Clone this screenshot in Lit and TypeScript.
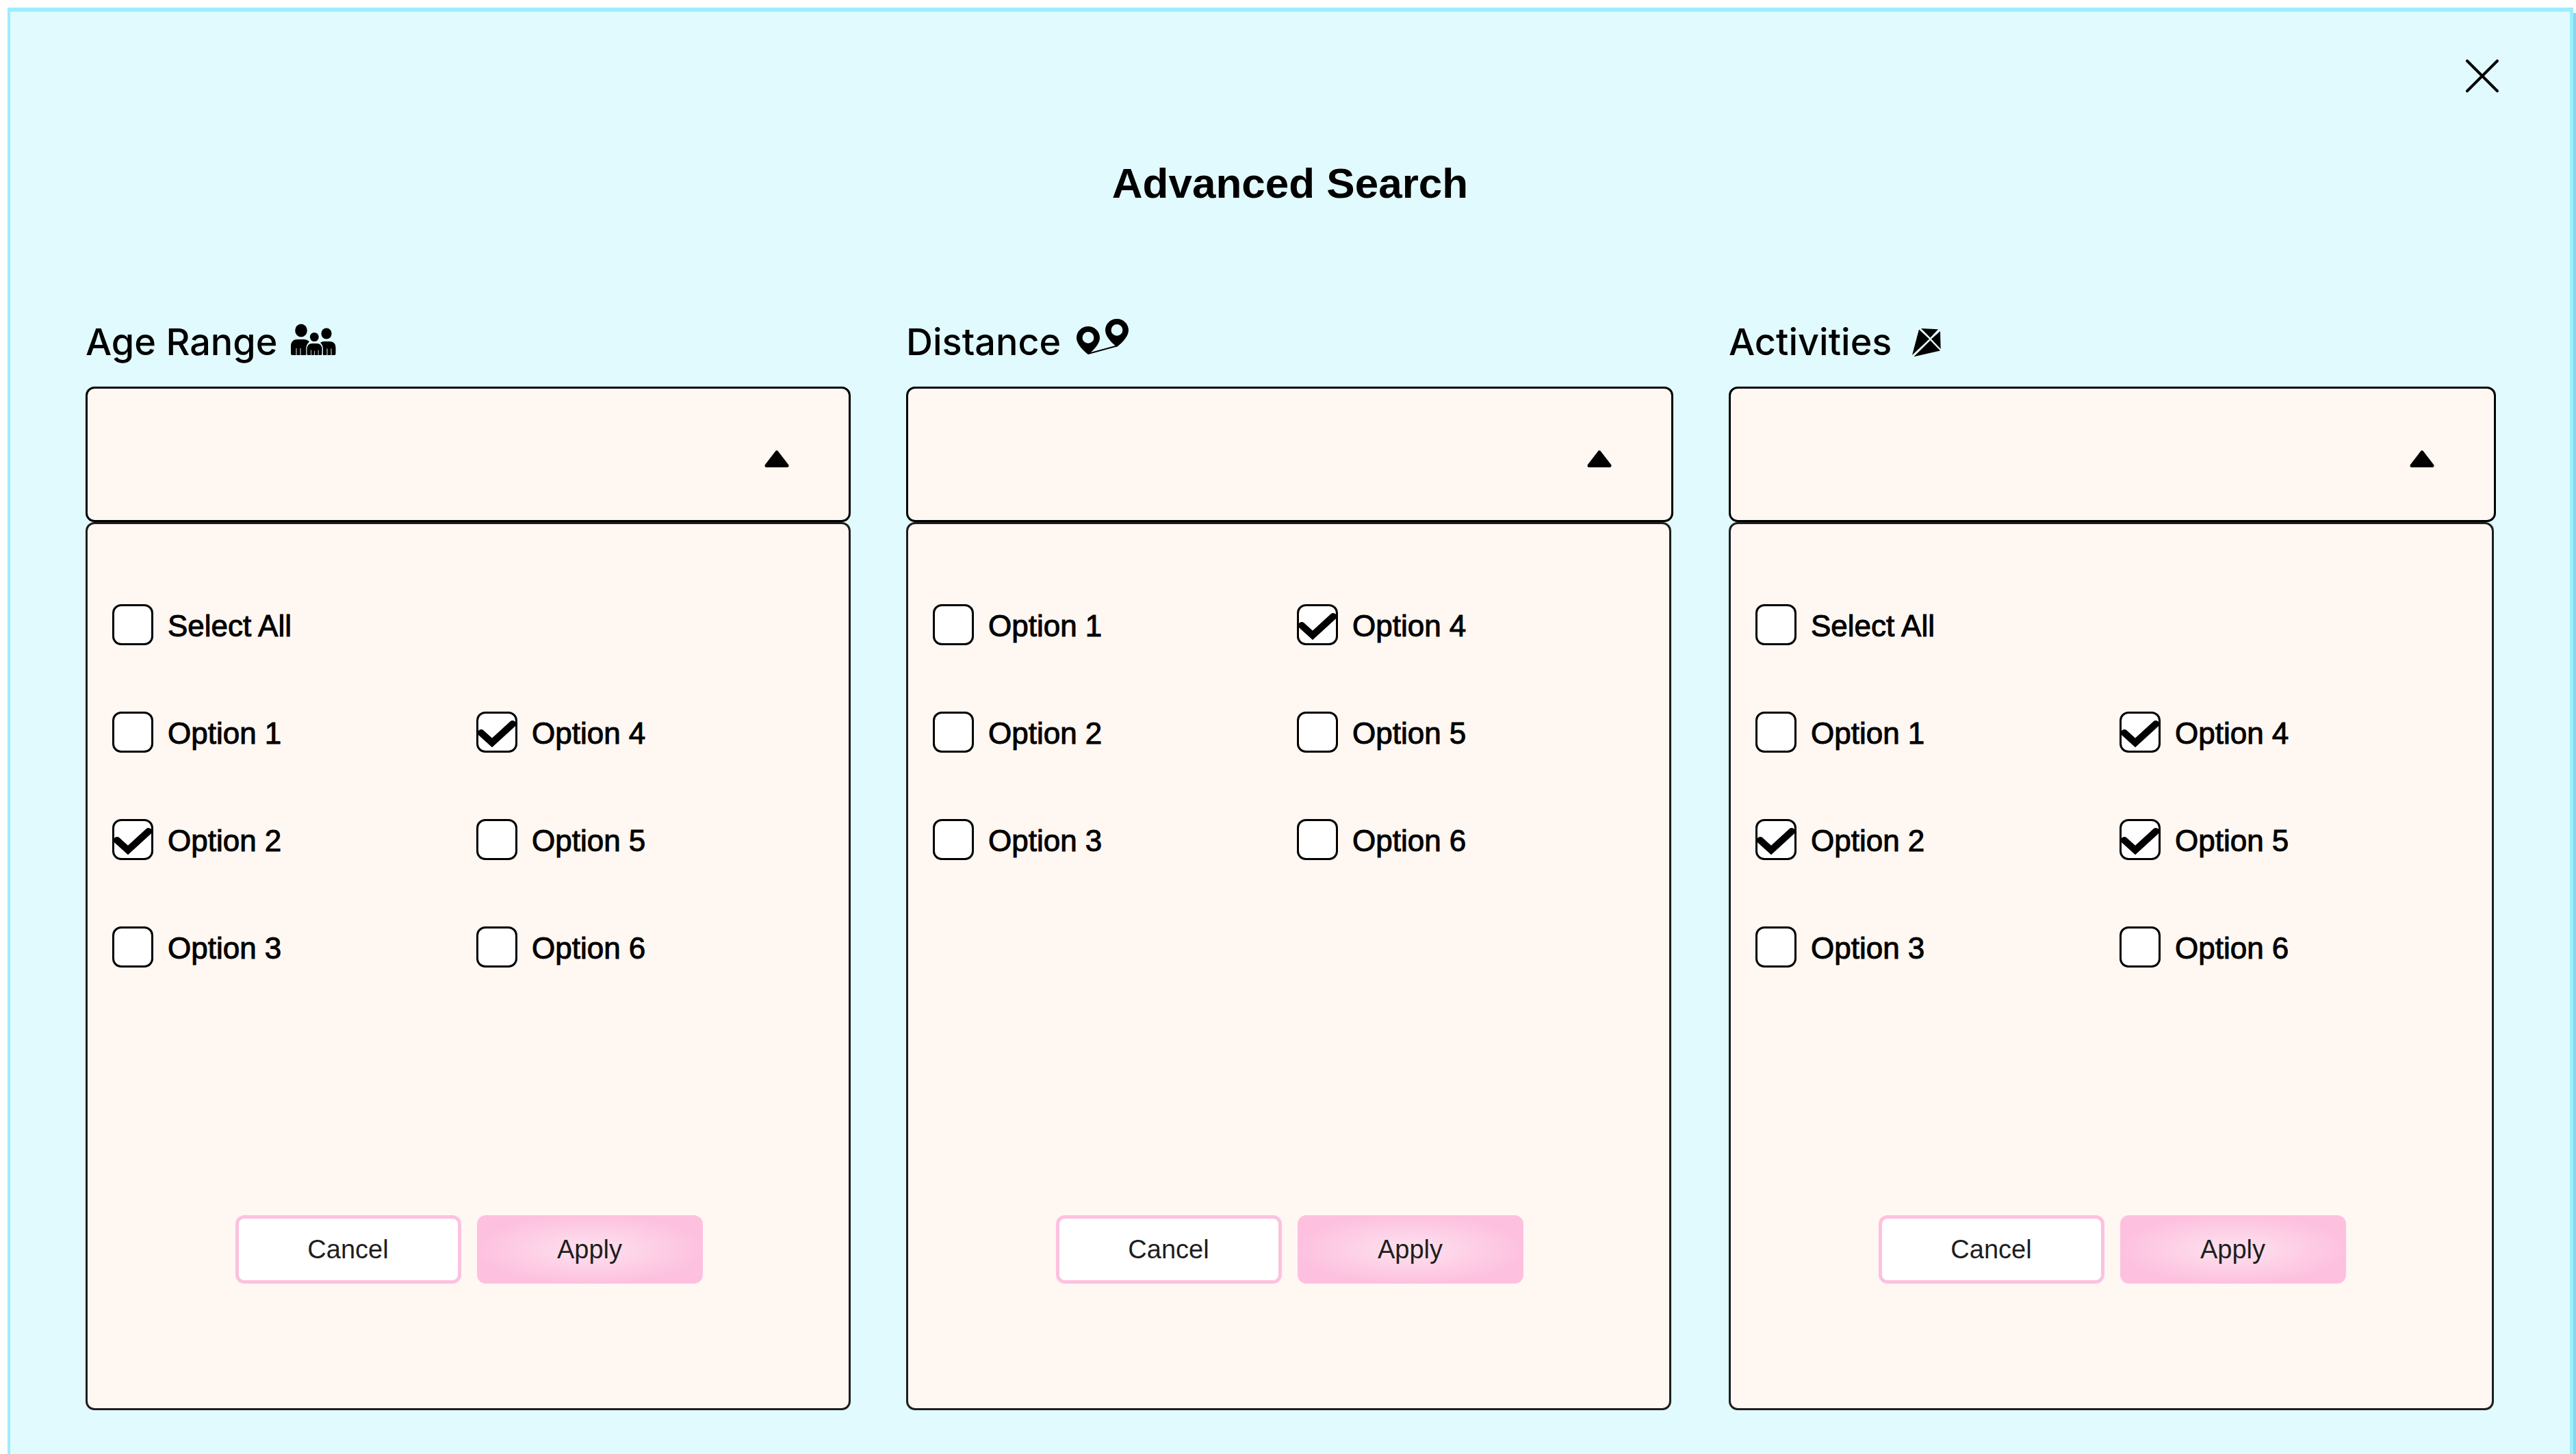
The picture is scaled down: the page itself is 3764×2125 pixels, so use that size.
import { LitElement, html, svg, css, nothing } from "lit";
import { customElement, property, state } from "lit/decorators.js";

interface Option {
  label: string;
  checked: boolean;
}

interface Filter {
  id: string;
  title: string;
  selectAll: boolean;
  options: Option[];
}

const makeOptions = (...checked: number[]): Option[] =>
  [1, 2, 3, 4, 5, 6].map((n) => ({ label: `Option ${n}`, checked: checked.includes(n) }));

const FILTERS: Filter[] = [
  { id: "age", title: "Age Range", selectAll: true, options: makeOptions(2, 4) },
  { id: "distance", title: "Distance", selectAll: false, options: makeOptions(4) },
  { id: "activities", title: "Activities", selectAll: true, options: makeOptions(2, 4, 5) },
];

const familyIcon = html`
  <svg class="icon" width="68" height="68" viewBox="0 0 68 68" aria-hidden="true">
    ${svg`
      <ellipse cx="16" cy="17" rx="8.800" ry="9.500"/>
      <ellipse cx="53" cy="21.500" rx="7.600" ry="8"/>
      <ellipse cx="35.300" cy="26.500" rx="6.400" ry="6.600"/>
      <path d="M1 50V40C1 33 5 30 11 30H20Q25 30 28 33.500Q23.500 37.500 23.300 43V53H15.500V43H14.500V53H9.500V43H8.500V53H3Q1 53 1 51Z"/>
      <path d="M24.500 51V45Q24.500 36 32 36H39Q46.500 36 46.500 45V51Q46.500 53 45 53H41.500V45.500H40.700V53H36V47H35.200V53H30.800V45.500H30V53H26Q24.500 53 24.500 51Z"/>
      <path d="M44 35Q46 33 49.500 33H57Q66.500 33 66.500 42V51Q66.500 53 64.500 53H60.500V43.500H59.500V53H54.500V43.500H53.500V53H48V45Q48 38 44 35Z"/>
    `}
  </svg>`;

const routeIcon = html`
  <svg class="icon" width="84" height="68" viewBox="0 0 84 68" aria-hidden="true">
    ${svg`
      <path fill-rule="evenodd" d="M22 11C31.500 11 39 18.500 39 27.500C39 36 31 45 22 52C13 45 5 36 5 27.500C5 18.500 12.500 11 22 11ZM22 19A8.400 8.400 0 1 0 22 35.800A8.400 8.400 0 1 0 22 19Z"/>
      <path fill-rule="evenodd" d="M64 0C73.500 0 81 7.500 81 16.500C81 25 73 34 64 41C55 34 47 25 47 16.500C47 7.500 54.500 0 64 0ZM64 8A8.400 8.400 0 1 0 64 24.800A8.400 8.400 0 1 0 64 8Z"/>
      <path d="M22 51L64 39.500" fill="none" stroke="#000" stroke-width="2"/>
    `}
  </svg>`;

const kiteIcon = html`
  <svg class="icon" width="56" height="68" viewBox="0 0 56 68" aria-hidden="true">
    ${svg`
      <path d="M25 14L50 15.300L38.500 27.500Z"/>
      <path d="M22 15.500L37 29.500L12 53Z"/>
      <path d="M53 18L53.700 44L40 29.500Z"/>
      <path d="M38.500 31.500L53 46.500L14.500 55.200Z"/>
    `}
  </svg>`;

const ICONS: Record<string, unknown> = {
  age: familyIcon,
  distance: routeIcon,
  activities: kiteIcon,
};

@customElement("filter-option")
export class FilterOption extends LitElement {
  @property() label = "";
  @property({ type: Boolean }) checked = false;

  static styles = css`
    :host {
      display: block;
    }
    .option {
      display: flex;
      align-items: flex-start;
      gap: 21px;
      width: max-content;
      font-size: 44px;
      line-height: 64px;
      cursor: pointer;
      -webkit-text-stroke: 1px #000;
    }
    .tick {
      display: grid;
    }
    .box,
    .mark {
      grid-area: 1 / 1;
      width: 60px;
      height: 60px;
    }
    .box {
      appearance: none;
      box-sizing: border-box;
      margin: 0;
      border: 3px solid #000;
      border-radius: 13px;
      background: #fff;
      cursor: pointer;
    }
    .mark {
      display: none;
      pointer-events: none;
    }
    .box:checked + .mark {
      display: block;
    }
  `;

  render() {
    return html`
      <label class="option">
        <span class="tick">
          <input
            class="box"
            type="checkbox"
            .checked=${this.checked}
            @change=${(e: Event) => (this.checked = (e.target as HTMLInputElement).checked)}
          />
          <svg class="mark" viewBox="0 0 60 60" aria-hidden="true">
            <path d="M7 31L23 45.500L53 18" fill="none" stroke="#000" stroke-width="10" stroke-linecap="round" />
          </svg>
        </span>
        <span>${this.label}</span>
      </label>
    `;
  }
}

@customElement("filter-group")
export class FilterGroup extends LitElement {
  @property({ attribute: false }) filter!: Filter;
  @state() private open = true;

  static styles = css`
    :host {
      display: block;
    }
    .heading {
      display: flex;
      align-items: center;
      gap: 18px;
      margin: 0 0 31px;
      font-family: Inter, sans-serif;
      font-size: 54px;
      font-weight: 500;
      line-height: 68px;
    }
    .icon {
      display: block;
      flex: none;
    }
    .trigger {
      display: flex;
      align-items: center;
      justify-content: flex-end;
      box-sizing: border-box;
      width: 100%;
      height: 198px;
      padding: 14px 87px 0 0;
      border: 3px solid #000;
      border-radius: 13px;
      background: #fff7f2;
      cursor: pointer;
    }
    .panel {
      display: flex;
      flex-direction: column;
      gap: 93px;
      box-sizing: border-box;
      min-height: 1298px;
      padding: 117px 12px 182px 36px;
      border: 3px solid #1e1e1e;
      border-radius: 13px;
      background: #fff7f2;
    }
    :host(:not(:first-child)) .panel {
      margin-right: 3px;
    }
    .panel[hidden] {
      display: none;
    }
    .options {
      display: grid;
      grid-template: repeat(3, auto) / repeat(2, 1fr);
      grid-auto-flow: column;
      row-gap: 93px;
    }
    .actions {
      display: flex;
      justify-content: center;
      gap: 23px;
      margin-top: auto;
      padding-right: 22px;
    }
    .action {
      flex: 0 1 330px;
      height: 100px;
      padding: 0;
      border: 5px solid #fdc1df;
      border-radius: 13px;
      color: #1e1e1e;
      font-family: inherit;
      font-size: 38px;
      line-height: 44px;
      cursor: pointer;
    }
    .cancel {
      background: #fff;
    }
    .apply {
      border: 0;
      background: radial-gradient(closest-side, #fee2ef, #fdc1df);
    }
  `;

  render() {
    const { id, title, selectAll, options } = this.filter;
    return html`
      <h2 class="heading"><span id="title">${title}</span>${ICONS[id]}</h2>
      <button
        class="trigger"
        type="button"
        aria-labelledby="title"
        aria-expanded=${this.open}
        aria-controls="panel"
        @click=${() => (this.open = !this.open)}
      >
        <svg width="36" height="26" viewBox="0 0 36 26" aria-hidden="true">
          <path d="M18 3L33 22.500H3Z" stroke="#000" stroke-width="5" stroke-linejoin="round" />
        </svg>
      </button>
      <div class="panel" id="panel" role="group" aria-labelledby="title" ?hidden=${!this.open}>
        ${selectAll ? html`<filter-option label="Select All"></filter-option>` : nothing}
        <div class="options">
          ${options.map((o) => html`<filter-option .label=${o.label} .checked=${o.checked}></filter-option>`)}
        </div>
        <div class="actions">
          <button class="action cancel" type="button">Cancel</button>
          <button class="action apply" type="button">Apply</button>
        </div>
      </div>
    `;
  }
}

@customElement("app-root")
export class AppRoot extends LitElement {
  static styles = css`
    :host {
      display: flex;
      box-sizing: border-box;
      min-height: 100vh;
      padding: 11px 4px 0 11px;
      overflow: hidden;
      background: #fefefe;
      color: #000;
      font-family: "Liberation Sans", Arial, sans-serif;
    }
    .dialog {
      display: flex;
      flex: 1;
      flex-direction: column;
      min-width: 0;
      padding: 70px 0 60px;
      border: solid #9eecff;
      border-width: 6px 5px 0 4px;
      background: #e1fafe;
      box-shadow: 4px 8px 0 #84d8ea;
    }
    .close {
      align-self: flex-end;
      width: 48px;
      height: 48px;
      margin-right: 104px;
      padding: 0;
      border: 0;
      background: none;
      cursor: pointer;
    }
    .close-icon {
      display: block;
    }
    .title {
      margin: 101px 0 166px;
      font-size: 62px;
      font-weight: 700;
      line-height: 64px;
      text-align: center;
    }
    .filters {
      display: grid;
      grid-template-columns: 1118fr 1121fr 1121fr;
      gap: 81px;
      padding: 0 108px 0 110px;
    }
  `;

  render() {
    return html`
      <main class="dialog">
        <button class="close" type="button" aria-label="Close">
          <svg class="close-icon" width="48" height="48" viewBox="0 0 48 48" aria-hidden="true">
            <path d="M2 2L46 46M46 2L2 46" stroke="#000" stroke-width="4" stroke-linecap="round" />
          </svg>
        </button>
        <h1 class="title">Advanced Search</h1>
        <div class="filters">
          ${FILTERS.map((f) => html`<filter-group .filter=${f}></filter-group>`)}
        </div>
      </main>
    `;
  }
}
